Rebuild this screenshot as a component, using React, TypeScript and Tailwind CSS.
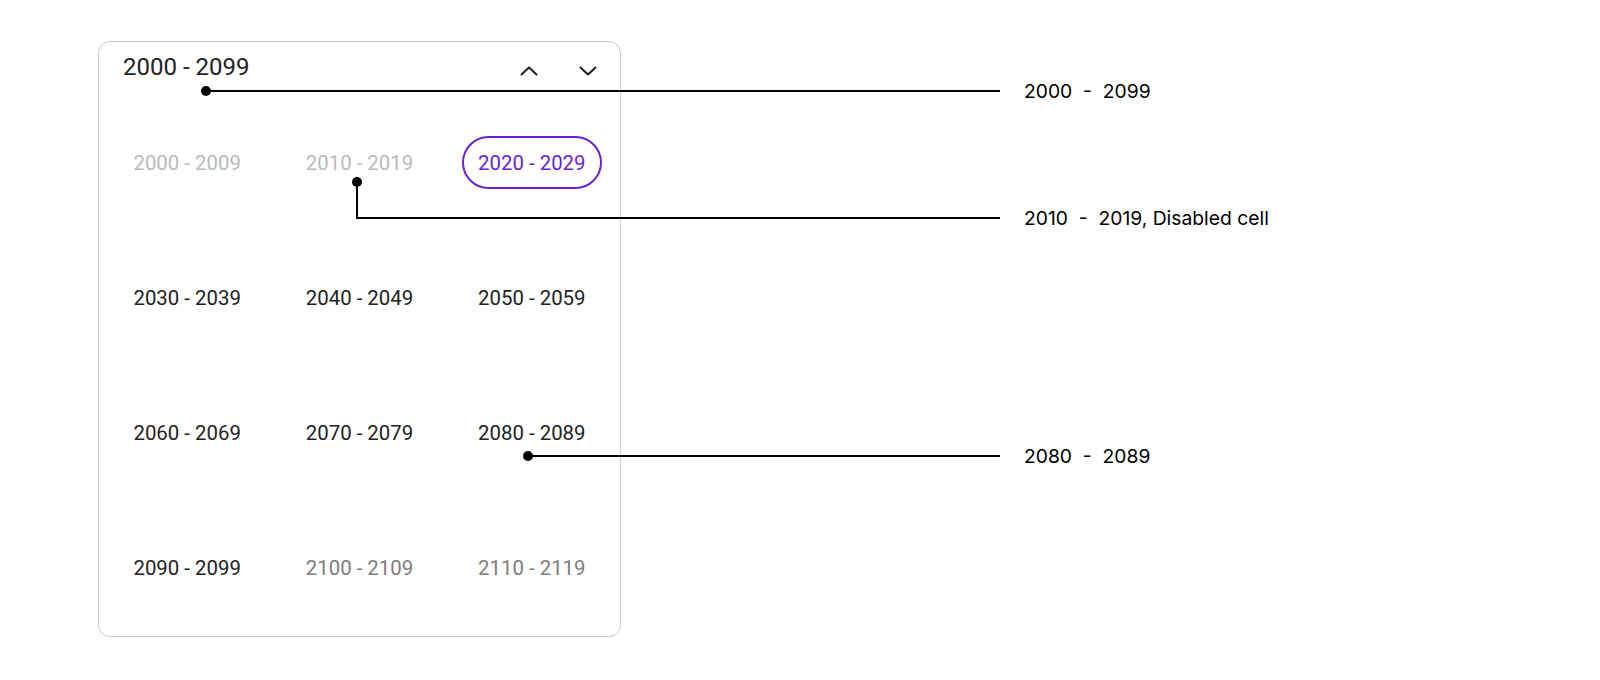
import React from "react";

type Cell = { label: string; tone: "disabled" | "normal" | "selected" | "outside" };

const CELLS: Cell[] = [
  { label: "2000 - 2009", tone: "disabled" },
  { label: "2010 - 2019", tone: "disabled" },
  { label: "2020 - 2029", tone: "selected" },
  { label: "2030 - 2039", tone: "normal" },
  { label: "2040 - 2049", tone: "normal" },
  { label: "2050 - 2059", tone: "normal" },
  { label: "2060 - 2069", tone: "normal" },
  { label: "2070 - 2079", tone: "normal" },
  { label: "2080 - 2089", tone: "normal" },
  { label: "2090 - 2099", tone: "normal" },
  { label: "2100 - 2109", tone: "outside" },
  { label: "2110 - 2119", tone: "outside" },
];

const TONE: Record<Cell["tone"], string> = {
  disabled: "text-[#bababa]",
  normal: "text-[#222222]",
  outside: "text-[#7d7d7d]",
  selected: "text-[#6a1fd4] border-2 border-[#6a1fd4] rounded-full w-[140px] h-[53px]",
};

function Chevron({ up }: { up?: boolean }) {
  return (
    <svg width="18" height="10" viewBox="0 0 18 10" fill="none">
      <polyline
        points={up ? "1.5,8.5 9,1.5 16.5,8.5" : "1.5,1.5 9,8.5 16.5,1.5"}
        stroke="#1f1f1f"
        strokeWidth="2"
        strokeLinecap="round"
        strokeLinejoin="round"
      />
    </svg>
  );
}

const dot = "w-[10px] h-[10px] rounded-full bg-black shrink-0";
const note = "ml-6 text-[19.3px] leading-6 text-black whitespace-pre font-['Inter',sans-serif]";

export default function App() {
  return (
    <div className="relative w-[1600px] h-[680px] bg-white pl-[98px] pt-[41px] font-['Roboto',sans-serif]">
      {/* Decade picker */}
      <div className="w-[523px] h-[596px] border border-[#c8c8c8] rounded-[12px] flex flex-col">
        <div className="h-[53px] pb-[3px] flex items-center justify-between pl-6 pr-3">
          <span className="text-[24px] leading-8 text-[#222222]">2000 - 2099</span>
          <div className="flex items-center gap-[19px] mt-[7px]">
            <button className="w-10 h-8 flex items-center justify-center">
              <Chevron up />
            </button>
            <button className="w-10 h-8 flex items-center justify-center">
              <Chevron />
            </button>
          </div>
        </div>
        <div className="grid grid-cols-3 grid-rows-4 px-[2px] flex-1">
          {CELLS.map((c) => (
            <div key={c.label} className="flex items-center justify-center">
              <span className={`flex items-center justify-center text-[20.4px] leading-7 ${TONE[c.tone]}`}>
                {c.label}
              </span>
            </div>
          ))}
        </div>
      </div>

      {/* Annotations */}
      <div className="absolute left-[201px] top-[79px] flex items-center">
        <div className={dot} />
        <div className="-ml-[5px] w-[794px] h-[2px] bg-black" />
        <span className={note}>2000  -  2099</span>
      </div>

      <div className="absolute left-[352px] top-[177px] flex flex-col items-start">
        <div className={dot} />
        <div className="flex items-end">
          <div className="ml-[4px] -mt-[5px] w-[644px] h-[37px] border-l-2 border-b-2 border-black" />
          <span className={`${note} -mb-[11px]`}>2010  -  2019, Disabled cell</span>
        </div>
      </div>

      <div className="absolute left-[523px] top-[444px] flex items-center">
        <div className={dot} />
        <div className="-ml-[5px] w-[472px] h-[2px] bg-black" />
        <span className={note}>2080  -  2089</span>
      </div>
    </div>
  );
}
